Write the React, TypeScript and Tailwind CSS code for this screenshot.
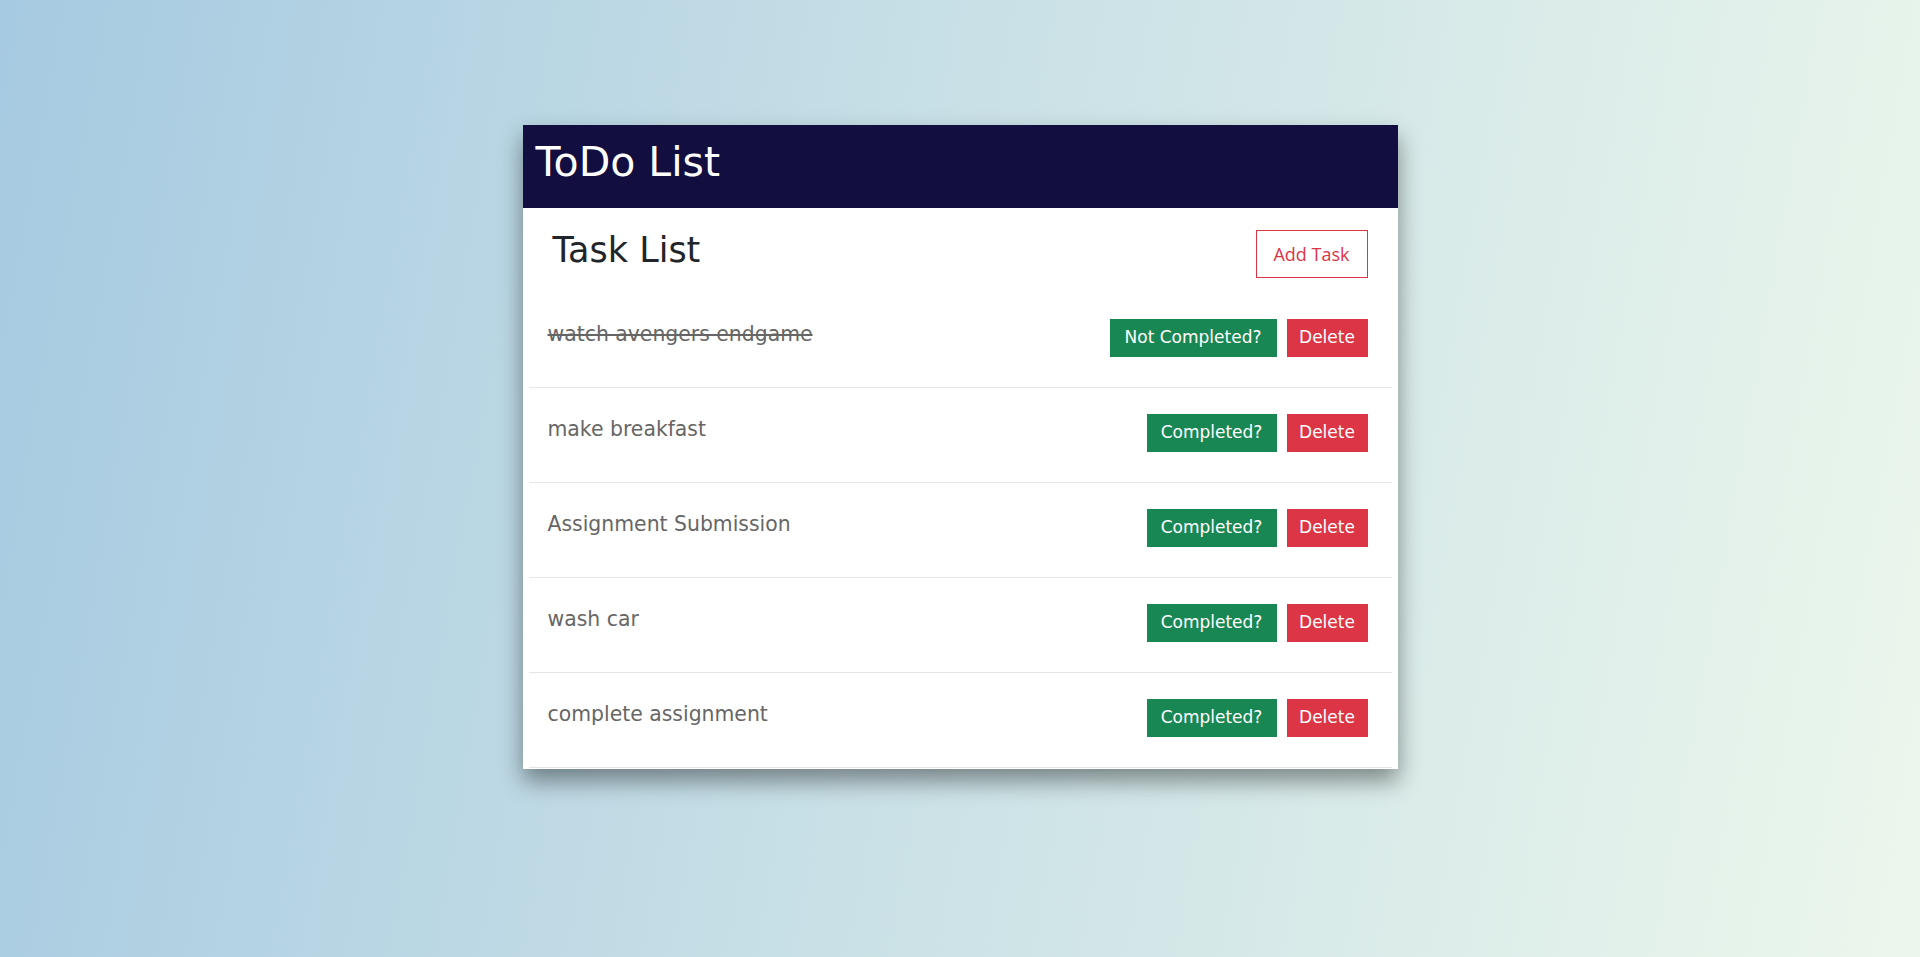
import React from "react";

type Task = { title: string; done: boolean };

const tasks: Task[] = [
  { title: "watch avengers endgame", done: true },
  { title: "make breakfast", done: false },
  { title: "Assignment Submission", done: false },
  { title: "wash car", done: false },
  { title: "complete assignment", done: false },
];

export default function App() {
  return (
    <div
      className="w-full h-[957px] bg-[linear-gradient(100deg,#a6cae1_0%,#c7dfe6_45%,#ecf7ec_100%)] flex justify-center pt-[125px]"
      style={{ fontFamily: '"DejaVu Sans", sans-serif' }}
    >
      <div className="w-[875px] h-[644px] bg-white shadow-[0_12px_22px_rgba(0,0,0,0.42)] flex flex-col">
        <div className="h-[83px] bg-[#130e40] pl-[13px] pt-[13px]">
          <h1 className="text-[41px] leading-[48px] text-white font-normal">ToDo List</h1>
        </div>
        <div className="flex flex-col px-[6px]">
          <div className="h-[85px] flex justify-between items-start pt-[22px] pl-[24px] pr-[24px]">
            <h2 className="text-[35px] leading-[41px] text-[#212529] font-normal">Task List</h2>
            <button
              className="h-[48px] w-[112px] border border-[#dc3545] text-[#dc3545] text-[18px] bg-white"
              style={{ fontFamily: '"Open Sans", sans-serif' }}
            >
              Add Task
            </button>
          </div>
          {tasks.map((t) => (
            <div
              key={t.title}
              className="h-[95px] border-b border-[#e6e6e6] flex justify-between items-start pt-[26px] pl-[19px] pr-[24px]"
            >
              <span
                className={
                  "text-[20.4px] leading-[29px] mt-[1px] text-[#666666]" +
                  (t.done ? " line-through" : "")
                }
              >
                {t.title}
              </span>
              <div className="flex gap-[10px]">
                <button
                  className={
                    "h-[38px] bg-[#198754] text-white text-[17px] " +
                    (t.done ? "w-[167px]" : "w-[130px]")
                  }
                >
                  {t.done ? "Not Completed?" : "Completed?"}
                </button>
                <button className="h-[38px] w-[81px] bg-[#dc3545] text-white text-[17px]">
                  Delete
                </button>
              </div>
            </div>
          ))}
        </div>
      </div>
    </div>
  );
}
